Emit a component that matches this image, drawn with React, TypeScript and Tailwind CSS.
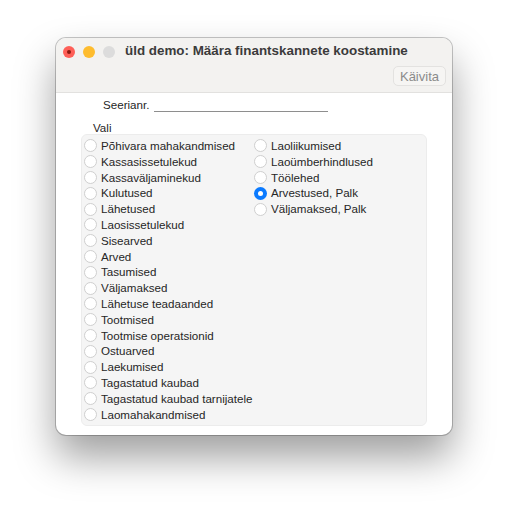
import React from 'react';

const leftOptions = [
  'Põhivara mahakandmised',
  'Kassasissetulekud',
  'Kassaväljaminekud',
  'Kulutused',
  'Lähetused',
  'Laosissetulekud',
  'Sisearved',
  'Arved',
  'Tasumised',
  'Väljamaksed',
  'Lähetuse teadaanded',
  'Tootmised',
  'Tootmise operatsionid',
  'Ostuarved',
  'Laekumised',
  'Tagastatud kaubad',
  'Tagastatud kaubad tarnijatele',
  'Laomahakandmised',
];

const rightOptions = [
  'Laoliikumised',
  'Laoümberhindlused',
  'Töölehed',
  'Arvestused, Palk',
  'Väljamaksed, Palk',
];

function Radio({ label, checked }: { label: string; checked?: boolean }) {
  return (
    <div className="flex h-[15.8px] items-center gap-[4px]">
      {checked ? (
        <span className="flex h-[13px] w-[13px] shrink-0 items-center justify-center rounded-full bg-[#0a7aff]">
          <span className="h-[5px] w-[5px] rounded-full bg-white" />
        </span>
      ) : (
        <span className="h-[13px] w-[13px] shrink-0 rounded-full border border-[#cfcfcf] bg-white" />
      )}
      <span className="whitespace-nowrap text-[11.6px] leading-none text-[#262626]">{label}</span>
    </div>
  );
}

export default function App() {
  const selected = 'Arvestused, Palk';

  return (
    <div
      className="h-[509px] w-[508px] bg-white pl-[56px] pt-[38px]"
      style={{ fontFamily: '"Liberation Sans", Arial, sans-serif' }}
    >
      <div className="flex h-[397px] w-[396px] flex-col overflow-hidden rounded-[10px] bg-white shadow-[0_0_0_1px_rgba(0,0,0,0.22),0_22px_40px_rgba(0,0,0,0.38)]">
        {/* title bar + toolbar */}
        <div className="flex h-[55px] shrink-0 flex-col border-b border-[#e2e1df] bg-[#f3f2f0]">
          <div className="flex h-[26px] items-center pt-[1px]">
            <div className="flex items-center gap-[8px] pl-[7px]">
              <span className="flex h-[12px] w-[12px] items-center justify-center rounded-full bg-[#fe5f57]">
                <span className="h-[4px] w-[4px] rounded-full bg-[#8c1a10]" />
              </span>
              <span className="h-[12px] w-[12px] rounded-full bg-[#febc2e]" />
              <span className="h-[12px] w-[12px] rounded-full bg-[#dcdcdc]" />
            </div>
            <span className="ml-[10px] whitespace-nowrap text-[13.4px] font-bold text-[#3b3b3b]">
              üld demo: Määra finantskannete koostamine
            </span>
          </div>
          <div className="flex justify-end pr-[6px] pt-[2px]">
            <button className="h-[20px] rounded-[5px] border border-[#e3e2e0] bg-[#f6f5f3] px-[6px] text-[13px] leading-none text-[#8b8b8b]">
              Käivita
            </button>
          </div>
        </div>

        {/* form */}
        <div className="flex flex-col pt-[4px]">
          <div className="flex h-[16px] items-end pl-[47px]">
            <span className="text-[11.6px] leading-[16px] text-[#262626]">Seerianr.</span>
            <span className="mb-[1px] ml-[5px] w-[174px] border-b border-[#8e8e8e]" />
          </div>
          <div className="mt-[7px] h-[14px] pl-[37px] text-[11.6px] leading-[16px] text-[#262626]">Vali</div>
          <div className="ml-[25px] flex h-[292px] w-[346px] rounded-[6px] border border-[#ececec] bg-[#f5f5f5] pl-[2px] pt-[3px]">
            <div className="flex w-[170px] flex-col">
              {leftOptions.map((o) => (
                <Radio key={o} label={o} checked={o === selected} />
              ))}
            </div>
            <div className="flex flex-col">
              {rightOptions.map((o) => (
                <Radio key={o} label={o} checked={o === selected} />
              ))}
            </div>
          </div>
        </div>
      </div>
    </div>
  );
}
